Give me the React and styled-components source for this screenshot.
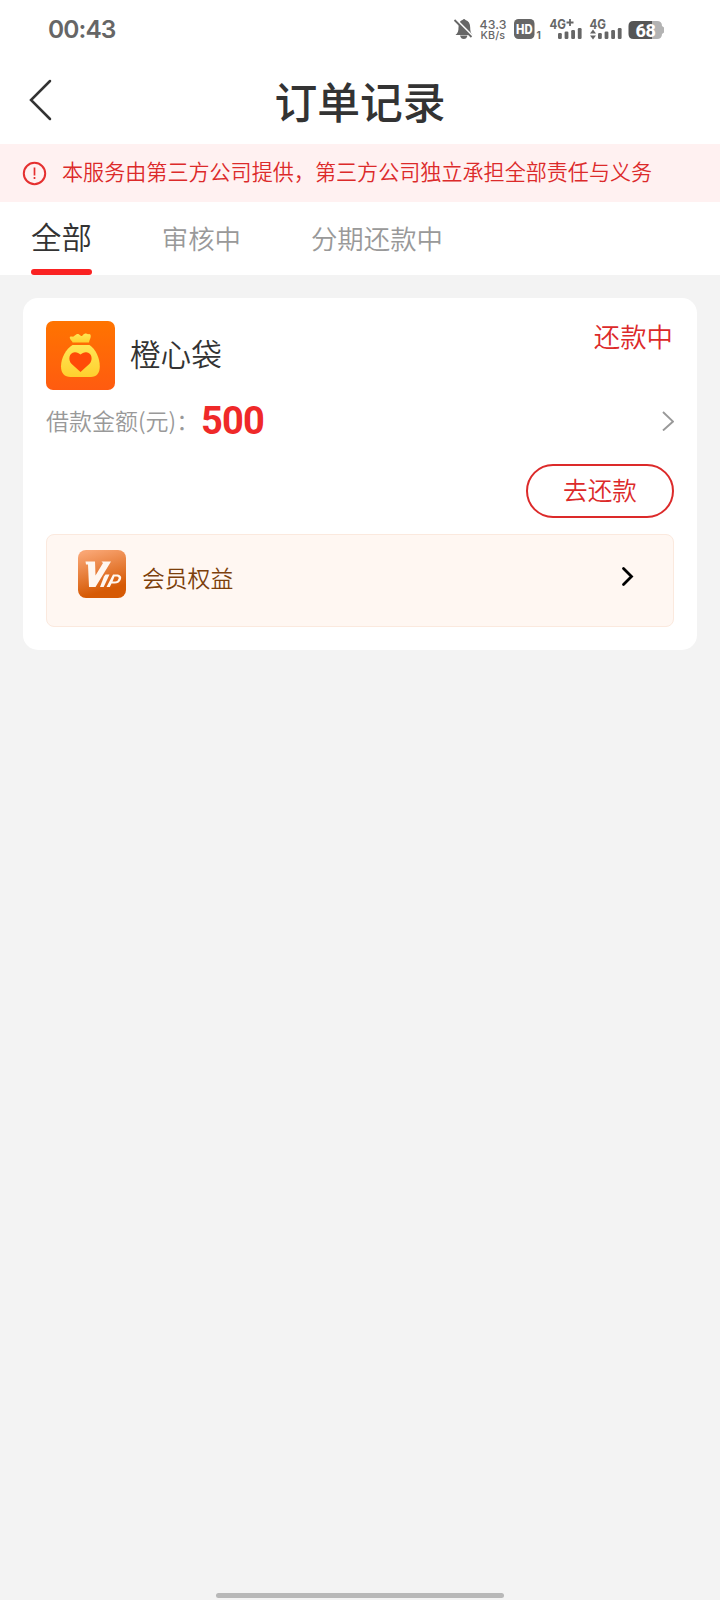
import styled, { createGlobalStyle } from "styled-components";

const GlobalStyle = createGlobalStyle`
  * {
    box-sizing: border-box;
    margin: 0;
    padding: 0;
  }

  body {
    background-color: #f3f3f3;
    color: #333;
    font-family: "Noto Sans CJK SC", sans-serif;
    font-weight: 350;
  }
`;

const Page = styled.div`
  display: flex;
  flex-direction: column;
  width: 720px;
  height: 1600px;
  overflow: hidden;
  background-color: #f3f3f3;
`;

const StatusBar = styled.div`
  display: flex;
  align-items: center;
  justify-content: space-between;
  height: 58px;
  padding: 0 51px 0 48px;
  background-color: #fff;
  color: #666;
  font-family: Inter, sans-serif;
`;

const Clock = styled.time`
  font-size: 24.5px;
  font-weight: 600;
  letter-spacing: -0.9px;
`;

const Header = styled.header`
  display: grid;
  grid-template-columns: 80px 1fr 80px;
  align-items: center;
  height: 86px;
  background-color: #fff;
`;

const BackButton = styled.button`
  height: 86px;
  padding: 0 0 2px 28px;
  border: none;
  background: none;
  text-align: left;

  svg {
    display: block;
  }
`;

const Title = styled.h1`
  padding-bottom: 2px;
  text-align: center;
  font-size: 42.8px;
  font-weight: 500;
  line-height: 60px;
`;

const Notice = styled.div`
  display: flex;
  align-items: center;
  gap: 15px;
  height: 58px;
  padding-left: 22px;
  background-color: #fff1f1;
  color: #dc2a2a;
  font-size: 21.08px;
  line-height: 30px;
  white-space: nowrap;
`;

const NoticeText = styled.span`
  padding-bottom: 4px;
`;

const Tabs = styled.nav`
  display: flex;
  gap: 70px;
  height: 73px;
  padding-left: 31px;
  background-color: #fff;
`;

const Tab = styled.a`
  display: flex;
  flex-direction: column;
  justify-content: space-between;
  color: ${(props) => (props.$active ? "#333" : "#999")};
  font-size: ${(props) => (props.$active ? "30.4px" : "26.4px")};
  line-height: ${(props) => (props.$active ? "68px" : "72px")};

  &::after {
    content: "";
    flex-shrink: 0;
    height: 6px;
    margin-top: -3px;
    border-radius: 3px;
    background-color: ${(props) => (props.$active ? "#fa2222" : "transparent")};
  }
`;

const TabLabel = styled.span`
  height: 70px;
`;

const Card = styled.section`
  margin: 23px 23px 0;
  padding: 23px;
  height: 352px;
  border-radius: 15px;
  background-color: #fff;
`;

const CardHeader = styled.div`
  display: flex;
  gap: 15px;
  height: 69px;
`;

const ProductName = styled.h2`
  flex: 1;
  font-size: 30.6px;
  font-weight: 350;
  line-height: 65px;
`;

const OrderStatus = styled.span`
  padding-right: 1px;
  color: #dc2a2a;
  font-size: 26.4px;
  line-height: 30px;
`;

const AmountRow = styled.div`
  display: flex;
  align-items: center;
  height: 62px;
  color: #999;
  font-size: 23px;

  svg {
    margin-left: auto;
  }
`;

const AmountLabel = styled.span`
  width: 155px;
  padding-bottom: 2px;
  white-space: nowrap;
`;

const Amount = styled.strong`
  color: #ef2929;
  font-family: Roboto, sans-serif;
  font-size: 38px;
  font-weight: 700;
  letter-spacing: -0.8px;
`;

const Actions = styled.div`
  display: flex;
  justify-content: flex-end;
  padding: 12px 0 16px;
`;

const PayButton = styled.button`
  width: 148px;
  height: 54px;
  padding-bottom: 4px;
  border: 2px solid #dc2a2a;
  border-radius: 27px;
  background-color: #fff;
  color: #dc2a2a;
  font-family: inherit;
  font-size: 24.6px;
  font-weight: 350;
  line-height: 44px;
`;

const VipBanner = styled.div`
  display: flex;
  gap: 16px;
  height: 93px;
  padding: 15px 39px 0 31px;
  border: 1px solid #fbe9de;
  border-radius: 8px;
  background-color: #fff7f2;
`;

const VipLabel = styled.span`
  flex: 1;
  color: #7c3f0b;
  font-size: 22.8px;
  line-height: 56px;
`;

const BannerArrow = styled.svg`
  margin-top: 15px;
`;

const HomeIndicator = styled.div`
  width: 288px;
  height: 5px;
  margin: auto auto 2px;
  border-radius: 3px;
  background-color: #b8b8b8;
`;

function StatusIcons() {
  return (
    <svg width="216" height="28" viewBox="453 14 216 28" fill="#666">
      <path d="M455.500 34c2.500-2 3-4 3-7.500 0-4.500 1.700-7 4-7.500 1.200-1.300 2-1.300 3 0 3 .8 4.700 3.500 4.700 7.500 0 3.500.5 5.500 2.300 7.500z" />
      <path d="M460 34.500h7.500q-.8 3.500-3.700 3.500t-3.800-3.500z" />
      <path d="M455.500 18l18 18" stroke="#fff" strokeWidth="2" />
      <path d="M454.500 19l17 17" stroke="#666" strokeWidth="1.800" />
      <text x="479.500" y="27.500" fontSize="12.300" fontWeight="500" textLength="27">
        43.3
      </text>
      <text x="480.500" y="38" fontSize="10.700" fontWeight="500" textLength="24.500">
        KB/s
      </text>
      <rect x="514" y="18" width="20.500" height="20" rx="4.500" />
      <text
        x="516"
        y="32.500"
        fontSize="12.500"
        fontWeight="800"
        fill="#fff"
        textLength="16.500"
        lengthAdjust="spacingAndGlyphs"
      >
        HD
      </text>
      <text x="536.500" y="38" fontSize="10" fontWeight="700">
        1
      </text>
      <text
        x="549.500"
        y="28"
        fontSize="13.500"
        fontWeight="700"
        textLength="16.500"
        lengthAdjust="spacingAndGlyphs"
      >
        4G
      </text>
      <path d="M566.500 21.500h7M570 18v7" stroke="#666" strokeWidth="1.800" />
      <Signal x={558} />
      <text
        x="589.500"
        y="28"
        fontSize="13.500"
        fontWeight="700"
        textLength="16.500"
        lengthAdjust="spacingAndGlyphs"
      >
        4G
      </text>
      <path d="M590 32.500l3-4 3 4zM590 34.500l3 4 3-4z" />
      <Signal x={598} />
      <path d="M633.500 20H652v18h-18.500q-5 0-5-5v-8q0-5 5-5z" fill="#555" />
      <path d="M652 20h5q5 0 5 5l2 1.500v5l-2 1.500q0 5-5 5h-5z" fill="#b3b3b3" />
      <text
        x="635.500"
        y="35.500"
        fontFamily="Roboto, sans-serif"
        fontSize="18"
        fontWeight="800"
        fill="#fff"
        textLength="20.500"
      >
        68
      </text>
    </svg>
  );
}

function Signal({ x }) {
  return [6, 7.5, 9, 11].map((height, i) => (
    <rect key={i} x={x + i * 6.6} y={38 - height} width="3.800" height={height} rx="1.200" />
  ));
}

function WarningIcon() {
  return (
    <svg width="25" height="25" viewBox="0 0 25 25" fill="none" stroke="#e53030" strokeWidth="2">
      <circle cx="12.5" cy="12.5" r="10.700" />
      <path d="M12.500 6.500v8M12.500 16v2" strokeWidth="1.700" />
    </svg>
  );
}

function MoneyBagIcon() {
  return (
    <svg width="69" height="69" viewBox="0 0 69 69">
      <defs>
        <linearGradient id="orange" x2="0" y2="1">
          <stop stopColor="#ff7400" />
          <stop offset="1" stopColor="#ff5b10" />
        </linearGradient>
        <linearGradient id="gold" x2="0" y2="1">
          <stop stopColor="#ffe655" />
          <stop offset="1" stopColor="#ffd02e" />
        </linearGradient>
      </defs>
      <rect width="69" height="69" rx="7" fill="url(#orange)" />
      <path
        d="M26.500 21.500c0-2-3-2.500-2.700-5.500 1.500-1 3.200.5 5-1.500 2-2.300 4-2 5.700 0q1 1 2 0c2-2.500 4-2.300 5.500-1.300q2.800-.7 2.800 1.800c0 3-1.500 3.500-1.800 6.500z"
        fill="url(#gold)"
      />
      <path
        d="M26.500 24h17c6 4 10.300 13 10.300 21.500 0 6.500-3.300 10.500-9 10.500H24.500c-6 0-9.500-4-9.500-10.500C15 37 20 28 26.500 24z"
        fill="url(#gold)"
      />
      <path
        d="M34.500 51L25.700 43c-4-4-2.700-11.500 3-11.800 2.500-.1 4.200.8 5.800 2.400 1.600-1.600 3.300-2.500 5.800-2.400 5.700.3 7 7.800 3 11.800z"
        fill="#ff4b08"
      />
    </svg>
  );
}

function VipIcon() {
  return (
    <svg width="48" height="48" viewBox="0 0 48 48">
      <defs>
        <linearGradient id="copper" x1="0.3" x2="0.6" y2="1">
          <stop stopColor="#f9a573" />
          <stop offset="0.85" stopColor="#d65a05" />
        </linearGradient>
      </defs>
      <rect width="48" height="48" rx="8" fill="url(#copper)" />
      {/* monogram mark */}
      <g fill="#fff7f0">
        <path d="M7.500 11.500h9.500l.5 14 7.500-12.500 -1.500-1.500H33L17.500 37H11l-1-22.500H8z" />
        <path d="M27.500 24.500h4L25.700 37H22l4-10.500z" />
        <path
          fillRule="evenodd"
          d="M35 24.500h5q4 1 3 4.500-1.500 4.500-6.500 4.500h-3L31.800 37H28.500zM36.500 26.500l-2 5h2.700q3-.5 3.500-3 .2-2-1.700-2z"
        />
      </g>
    </svg>
  );
}

const tabs = ["全部", "审核中", "分期还款中"];

function OrderCard() {
  return (
    <Card>
      <CardHeader>
        <MoneyBagIcon />
        <ProductName>橙心袋</ProductName>
        <OrderStatus>还款中</OrderStatus>
      </CardHeader>
      <AmountRow>
        <AmountLabel>借款金额(元)：</AmountLabel>
        <Amount>500</Amount>
        <svg width="12" height="20" fill="none" stroke="#999" strokeWidth="1.9">
          <path d="M1 1l10 9.500-10 9" />
        </svg>
      </AmountRow>
      <Actions>
        <PayButton>去还款</PayButton>
      </Actions>
      <VipBanner>
        <VipIcon />
        <VipLabel>会员权益</VipLabel>
        <BannerArrow width="14" height="22" fill="none" stroke="#000" strokeWidth="2.8">
          <path d="M3.500 3.500l8 8-8 8" strokeLinecap="round" />
        </BannerArrow>
      </VipBanner>
    </Card>
  );
}

function App() {
  return (
    <>
      <GlobalStyle />
      <Page>
        <StatusBar>
          <Clock>00:43</Clock>
          <StatusIcons />
        </StatusBar>
        <Header>
          <BackButton aria-label="返回">
            <svg width="26" height="42" fill="none" stroke="#333" strokeWidth="2.5">
              <path d="M22 2L3 21l19 19" strokeLinecap="round" />
            </svg>
          </BackButton>
          <Title>订单记录</Title>
        </Header>
        <Notice>
          <WarningIcon />
          <NoticeText>本服务由第三方公司提供，第三方公司独立承担全部责任与义务</NoticeText>
        </Notice>
        <Tabs>
          {tabs.map((tab, i) => (
            <Tab key={tab} $active={i === 0}>
              <TabLabel>{tab}</TabLabel>
            </Tab>
          ))}
        </Tabs>
        <OrderCard />
        <HomeIndicator />
      </Page>
    </>
  );
}

export default App;
